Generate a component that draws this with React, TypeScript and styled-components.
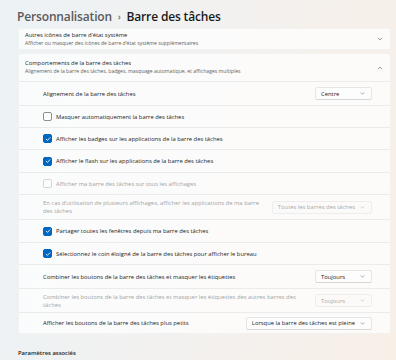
import React from "react";
import styled, { createGlobalStyle } from "styled-components";

const GlobalStyle = createGlobalStyle`
  html, body { margin: 0; padding: 0; }
  body {
    width: 396px;
    height: 360px;
    overflow: hidden;
    background: linear-gradient(100deg, #ecf2f5 0%, #f2f1f0 45%, #f8efe7 100%);
    font-family: "Open Sans", "Noto Sans", sans-serif;
    color: #1b1b1b;
  }
`;

const Page = styled.div`
  display: flex;
  flex-direction: column;
  padding: 0 5px 0 18px;
  box-sizing: border-box;
  & > * { flex-shrink: 0; }
`;

const TitleRow = styled.h1`
  margin: 0 0 0 -1px;
  height: 28px;
  padding-top: 4px;
  box-sizing: border-box;
  display: flex;
  align-items: center;
  gap: 6px;
  font-size: 12px;
  font-weight: 600;
  letter-spacing: -0.15px;
`;

const Crumb = styled.span`
  color: #5a5a5a;
`;

const Sep = styled.span`
  color: #5a5a5a;
  font-size: 8px;
  font-weight: 600;
`;

const Current = styled.span`
  color: #1a1a1a;
`;

const Card = styled.section`
  background: rgba(255, 255, 255, 0.72);
  border: 1px solid rgba(0, 0, 0, 0.035);
  border-radius: 3px;
  margin-bottom: 3px;
`;

const CardHeader = styled.div<{ $h: number }>`
  height: ${(p) => p.$h}px;
  display: flex;
  align-items: center;
  padding: 0 7px 0 6px;
  box-sizing: border-box;
`;

const HeaderText = styled.div`
  flex: 1;
  display: flex;
  flex-direction: column;
  gap: 0.5px;
`;

const HeaderTitle = styled.div`
  font-size: 5.85px;
  line-height: 7.5px;
  color: #1b1b1b;
`;

const HeaderSub = styled.div`
  font-size: 5.1px;
  line-height: 6.5px;
  color: #5f5f5f;
`;

const Row = styled.div<{ $h?: number }>`
  height: ${(p) => p.$h ?? 22}px;
  box-sizing: border-box;
  border-top: 1px solid #ebebeb;
  display: flex;
  align-items: center;
  padding: 0 18px 0 24px;
  gap: 8px;
`;

const RowLabel = styled.div<{ $disabled?: boolean; $maxW?: number }>`
  flex: 1;
  font-size: 5.85px;
  line-height: 8px;
  color: ${(p) => (p.$disabled ? "#a3a3a3" : "#1b1b1b")};
  & > span {
    display: block;
    max-width: ${(p) => (p.$maxW ? `${p.$maxW}px` : "none")};
  }
`;

const CheckWrap = styled.label<{ $disabled?: boolean }>`
  flex: 1;
  display: flex;
  align-items: center;
  gap: 4px;
  font-size: 5.85px;
  line-height: 8px;
  color: ${(p) => (p.$disabled ? "#a3a3a3" : "#1b1b1b")};
`;

const Box = styled.span<{ $checked?: boolean; $disabled?: boolean }>`
  width: 9px;
  height: 9px;
  box-sizing: border-box;
  border-radius: 2px;
  display: flex;
  align-items: center;
  justify-content: center;
  flex-shrink: 0;
  background: ${(p) => (p.$checked ? "#0067c0" : "rgba(255,255,255,0.6)")};
  border: 1px solid
    ${(p) => (p.$checked ? "#0067c0" : p.$disabled ? "#d6d6d6" : "#8f8f8f")};
`;

const Dropdown = styled.div<{ $disabled?: boolean }>`
  height: 13px;
  min-width: 57px;
  box-sizing: border-box;
  display: flex;
  align-items: center;
  justify-content: space-between;
  gap: 5px;
  padding: 0 6px 0 5px;
  border-radius: 2.5px;
  background: ${(p) => (p.$disabled ? "rgba(250,250,250,0.5)" : "#fdfdfd")};
  border: 1px solid ${(p) => (p.$disabled ? "#ededed" : "#e6e6e6")};
  border-bottom-color: ${(p) => (p.$disabled ? "#ededed" : "#d6d6d6")};
  font-size: 5.85px;
  color: ${(p) => (p.$disabled ? "#a8a8a8" : "#1b1b1b")};
  white-space: nowrap;
`;

const Chevron = ({ up, color = "#6b6b6b", size = 6 }: { up?: boolean; color?: string; size?: number }) => (
  <svg width={size} height={size} viewBox="0 0 10 10" style={{ flexShrink: 0 }}>
    <path
      d={up ? "M2 6.5 L5 3.5 L8 6.5" : "M2 3.5 L5 6.5 L8 3.5"}
      fill="none"
      stroke={color}
      strokeWidth="1.2"
      strokeLinecap="round"
      strokeLinejoin="round"
    />
  </svg>
);

const Tick = () => (
  <svg width="6" height="6" viewBox="0 0 10 10">
    <path d="M2 5.3 L4.1 7.3 L8.2 2.9" fill="none" stroke="#fff" strokeWidth="1.4" strokeLinecap="round" strokeLinejoin="round" />
  </svg>
);

const Section = styled.h2`
  margin: 12px 0 0 0;
  font-size: 5.85px;
  line-height: 8px;
  font-weight: 600;
  color: #1b1b1b;
`;

const Check = ({ label, checked, disabled }: { label: string; checked?: boolean; disabled?: boolean }) => (
  <CheckWrap $disabled={disabled}>
    <Box $checked={checked} $disabled={disabled}>{checked && <Tick />}</Box>
    {label}
  </CheckWrap>
);

const Select = ({ value, disabled }: { value: string; disabled?: boolean }) => (
  <Dropdown $disabled={disabled}>
    <span>{value}</span>
    <Chevron size={5} color={disabled ? "#b5b5b5" : "#707070"} />
  </Dropdown>
);

export default function App() {
  return (
    <>
      <GlobalStyle />
      <Page>
        <TitleRow>
          <Crumb>Personnalisation</Crumb>
          <Sep>›</Sep>
          <Current>Barre des tâches</Current>
        </TitleRow>

        <Card>
          <CardHeader $h={20}>
            <HeaderText>
              <HeaderTitle>Autres icônes de barre d’état système</HeaderTitle>
              <HeaderSub>Afficher ou masquer des icônes de barre d’état système supplémentaires</HeaderSub>
            </HeaderText>
            <Chevron />
          </CardHeader>
        </Card>

        <Card>
          <CardHeader $h={27}>
            <HeaderText>
              <HeaderTitle>Comportements de la barre des tâches</HeaderTitle>
              <HeaderSub>
                Alignement de la barre des tâches, badges, masquage automatique, et affichages multiples
              </HeaderSub>
            </HeaderText>
            <Chevron up />
          </CardHeader>
          <Row $h={24}>
            <RowLabel>Alignement de la barre des tâches</RowLabel>
            <Select value="Centre" />
          </Row>
          <Row $h={22}>
            <Check label="Masquer automatiquement la barre des tâches" />
          </Row>
          <Row $h={22}>
            <Check checked label="Afficher les badges sur les applications de la barre des tâches" />
          </Row>
          <Row $h={23}>
            <Check checked label="Afficher le flash sur les applications de la barre des tâches" />
          </Row>
          <Row $h={22}>
            <Check disabled label="Afficher ma barre des tâches sur tous les affichages" />
          </Row>
          <Row $h={25}>
            <RowLabel $disabled $maxW={220}>
              <span>
                En cas d’utilisation de plusieurs affichages, afficher les applications de ma barre des tâches
              </span>
            </RowLabel>
            <Select disabled value="Toutes les barres des tâches" />
          </Row>
          <Row $h={23}>
            <Check checked label="Partager toutes les fenêtres depuis ma barre des tâches" />
          </Row>
          <Row $h={22}>
            <Check checked label="Sélectionnez le coin éloigné de la barre des tâches pour afficher le bureau" />
          </Row>
          <Row $h={24}>
            <RowLabel>Combiner les boutons de la barre des tâches et masquer les étiquettes</RowLabel>
            <Select value="Toujours" />
          </Row>
          <Row $h={24}>
            <RowLabel $disabled>
              Combiner les boutons de la barre des tâches et masquer les étiquettes des autres barres des tâches
            </RowLabel>
            <Select disabled value="Toujours" />
          </Row>
          <Row $h={21}>
            <RowLabel>Afficher les boutons de la barre des tâches plus petits</RowLabel>
            <Select value="Lorsque la barre des tâches est pleine" />
          </Row>
        </Card>

        <Section>Paramètres associés</Section>
      </Page>
    </>
  );
}
